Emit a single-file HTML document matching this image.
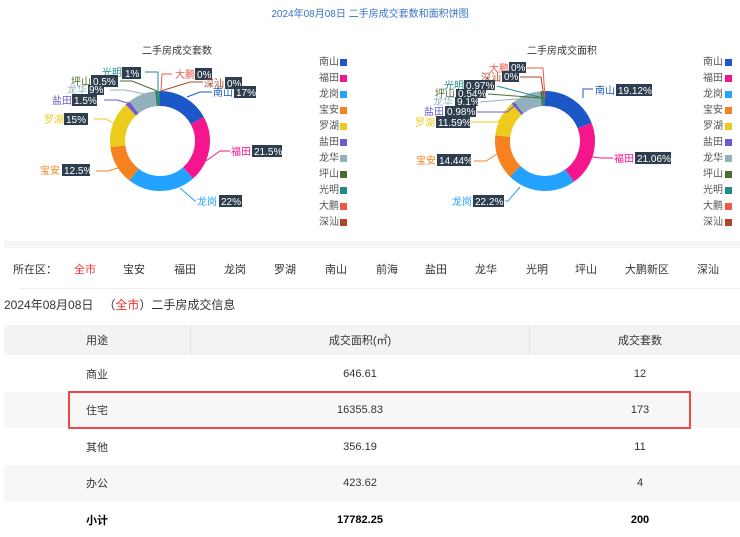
<!DOCTYPE html>
<html><head><meta charset="utf-8"><style>
body{margin:0;width:740px;height:537px;background:#fff;font-family:"Liberation Sans","Noto Sans CJK SC",sans-serif;position:relative;overflow:hidden;color:#333}
.a{position:absolute;white-space:nowrap}
.t{font-size:11px}
.lg{position:absolute;font-size:10px;color:#555}
.lg i{position:absolute;width:7px;height:7px;border-radius:1px}
.f{position:absolute;top:261px;font-size:11px;color:#333;transform:translateX(-50%)}
.c{position:absolute;font-size:11px;transform:translate(-50%,-50%)}
</style></head><body>
<div class="a" style="left:0;width:740px;top:5px;text-align:center;font-size:10px;color:#3b73c9">2024年08月08日 二手房成交套数和面积饼图</div>
<div class="a" style="left:142px;top:42px;font-size:10px;color:#333">二手房成交套数</div>
<div class="a" style="left:527px;top:42px;font-size:10px;color:#333">二手房成交面积</div>

<svg width="740" height="240" style="position:absolute;left:0;top:0" font-family="Liberation Sans,Noto Sans CJK SC,sans-serif" font-size="10">
<g transform="translate(160,141) rotate(-90)" fill="none" stroke-width="15">
<circle r="42.5" pathLength="100" stroke="#1c57c7" stroke-dasharray="17 83" stroke-dashoffset="0"/>
<circle r="42.5" pathLength="100" stroke="#f5168e" stroke-dasharray="21.5 78.5" stroke-dashoffset="-17"/>
<circle r="42.5" pathLength="100" stroke="#23a3ff" stroke-dasharray="22 78" stroke-dashoffset="-38.5"/>
<circle r="42.5" pathLength="100" stroke="#f5821f" stroke-dasharray="12.5 87.5" stroke-dashoffset="-60.5"/>
<circle r="42.5" pathLength="100" stroke="#eccb1c" stroke-dasharray="15 85" stroke-dashoffset="-73"/>
<circle r="42.5" pathLength="100" stroke="#6c5acf" stroke-dasharray="1.5 98.5" stroke-dashoffset="-88"/>
<circle r="42.5" pathLength="100" stroke="#93b1bd" stroke-dasharray="9 91" stroke-dashoffset="-89.5"/>
<circle r="42.5" pathLength="100" stroke="#4d6b2a" stroke-dasharray="0.5 99.5" stroke-dashoffset="-98.5"/>
<circle r="42.5" pathLength="100" stroke="#1f8b8b" stroke-dasharray="1 99" stroke-dashoffset="-99"/>
</g>
<g transform="translate(545,141) rotate(-90)" fill="none" stroke-width="15">
<circle r="42.5" pathLength="100" stroke="#1c57c7" stroke-dasharray="19.12 80.88" stroke-dashoffset="0"/>
<circle r="42.5" pathLength="100" stroke="#f5168e" stroke-dasharray="21.06 78.94" stroke-dashoffset="-19.12"/>
<circle r="42.5" pathLength="100" stroke="#23a3ff" stroke-dasharray="22.2 77.8" stroke-dashoffset="-40.18"/>
<circle r="42.5" pathLength="100" stroke="#f5821f" stroke-dasharray="14.44 85.56" stroke-dashoffset="-62.38"/>
<circle r="42.5" pathLength="100" stroke="#eccb1c" stroke-dasharray="11.59 88.41" stroke-dashoffset="-76.82"/>
<circle r="42.5" pathLength="100" stroke="#6c5acf" stroke-dasharray="0.98 99.02" stroke-dashoffset="-88.41"/>
<circle r="42.5" pathLength="100" stroke="#93b1bd" stroke-dasharray="9.1 90.9" stroke-dashoffset="-89.39"/>
<circle r="42.5" pathLength="100" stroke="#4d6b2a" stroke-dasharray="0.54 99.46" stroke-dashoffset="-98.49"/>
<circle r="42.5" pathLength="100" stroke="#1f8b8b" stroke-dasharray="0.97 99.03" stroke-dashoffset="-99.03"/>
</g>
<!-- leader lines left -->
<g fill="none" stroke-width="1">
<polyline points="187,97 200,92 212,92" stroke="#1c57c7"/>
<polyline points="203,163 220,151 230,151" stroke="#f5168e"/>
<polyline points="180,188 195,201 196,201" stroke="#23a3ff"/>
<polyline points="118,168 108,171 96,171" stroke="#f5821f"/>
<polyline points="113,123 106,119 94,119" stroke="#eccb1c"/>
<polyline points="128,103 117,100 104,100" stroke="#6c5acf"/>
<polyline points="145,94 125,90 110,90" stroke="#93b1bd"/>
<polyline points="157,91 132,81 120,81" stroke="#4d6b2a"/>
<polyline points="158,91 158,72 145,72" stroke="#1f8b8b"/>
<polyline points="161,91 162,74 172,74" stroke="#f0584a"/>
<polyline points="161,91 190,82 203,82" stroke="#b2432a"/>
<polyline points="583,98 583,89 593,89" stroke="#1c57c7"/>
<polyline points="587,156 600,158 613,158" stroke="#f5168e"/>
<polyline points="520,187 508,201 505,201" stroke="#23a3ff"/>
<polyline points="500,152 486,161 474,161" stroke="#f5821f"/>
<polyline points="510,112 497,122 471,122" stroke="#eccb1c"/>
<polyline points="517,104 507,112 477,112" stroke="#6c5acf"/>
<polyline points="530,98 480,102" stroke="#93b1bd"/>
<polyline points="542,98 488,94" stroke="#4d6b2a"/>
<polyline points="543,98 497,86" stroke="#1f8b8b"/>
<polyline points="544,98 541,77 520,77" stroke="#b2432a"/>
<polyline points="545,98 543,68 527,68" stroke="#f0584a"/>
</g>
<g>
<text x="102" y="76" fill="#1f8b8b">光明</text><rect x="122" y="67" width="19" height="12" fill="#2f3e4e"/><text x="125" y="77" fill="#fff">1%</text>
<text x="175" y="78" fill="#f0584a">大鹏</text><rect x="195" y="68" width="17" height="12" fill="#2f3e4e"/><text x="197" y="78" fill="#fff">0%</text>
<text x="204" y="87" fill="#b2432a">深汕</text><rect x="225" y="77" width="17" height="12" fill="#2f3e4e"/><text x="227" y="87" fill="#fff">0%</text>
<text x="213" y="96" fill="#1c57c7">南山</text><rect x="234" y="86" width="22" height="12" fill="#2f3e4e"/><text x="236" y="96" fill="#fff">17%</text>
<text x="71" y="85" fill="#4d6b2a">坪山</text><rect x="91" y="75" width="27" height="12" fill="#2f3e4e"/><text x="93" y="85" fill="#fff">0.5%</text>
<text x="67" y="93" fill="#93b1bd">龙华</text><rect x="88" y="85" width="16" height="10" fill="#2f3e4e"/><text x="89" y="93" fill="#fff">9%</text>
<text x="52" y="104" fill="#6c5acf">盐田</text><rect x="72" y="94" width="25" height="12" fill="#2f3e4e"/><text x="74" y="104" fill="#fff">1.5%</text>
<text x="44" y="123" fill="#eccb1c">罗湖</text><rect x="64" y="113" width="24" height="12" fill="#2f3e4e"/><text x="66" y="123" fill="#fff">15%</text>
<text x="231" y="155" fill="#f5168e">福田</text><rect x="252" y="145" width="30" height="12" fill="#2f3e4e"/><text x="254" y="155" fill="#fff">21.5%</text>
<text x="40" y="174" fill="#f5821f">宝安</text><rect x="62" y="164" width="28" height="12" fill="#2f3e4e"/><text x="64" y="174" fill="#fff">12.5%</text>
<text x="197" y="205" fill="#23a3ff">龙岗</text><rect x="219" y="195" width="23" height="12" fill="#2f3e4e"/><text x="221" y="205" fill="#fff">22%</text>

<text x="489" y="72" fill="#f0584a">大鹏</text><rect x="509" y="62" width="17" height="11" fill="#2f3e4e"/><text x="511" y="71" fill="#fff">0%</text>
<text x="481" y="81" fill="#b2432a">深汕</text><rect x="502" y="71" width="17" height="11" fill="#2f3e4e"/><text x="504" y="80" fill="#fff">0%</text>
<text x="444" y="89" fill="#1f8b8b">光明</text><rect x="464" y="80" width="31" height="10" fill="#2f3e4e"/><text x="466" y="89" fill="#fff">0.97%</text>
<text x="435" y="97" fill="#4d6b2a">坪山</text><rect x="456" y="89" width="30" height="9" fill="#2f3e4e"/><text x="458" y="97" fill="#fff">0.54%</text>
<text x="433" y="105" fill="#93b1bd">龙华</text><rect x="455" y="97" width="23" height="9" fill="#2f3e4e"/><text x="457" y="105" fill="#fff">9.1%</text>
<text x="424" y="115" fill="#6c5acf">盐田</text><rect x="445" y="106" width="31" height="11" fill="#2f3e4e"/><text x="447" y="115" fill="#fff">0.98%</text>
<text x="415" y="126" fill="#eccb1c">罗湖</text><rect x="436" y="116" width="34" height="12" fill="#2f3e4e"/><text x="438" y="126" fill="#fff">11.59%</text>
<text x="595" y="94" fill="#1c57c7">南山</text><rect x="616" y="84" width="36" height="12" fill="#2f3e4e"/><text x="618" y="94" fill="#fff">19.12%</text>
<text x="614" y="162" fill="#f5168e">福田</text><rect x="635" y="152" width="36" height="12" fill="#2f3e4e"/><text x="637" y="162" fill="#fff">21.06%</text>
<text x="416" y="164" fill="#f5821f">宝安</text><rect x="437" y="154" width="34" height="12" fill="#2f3e4e"/><text x="439" y="164" fill="#fff">14.44%</text>
<text x="452" y="205" fill="#23a3ff">龙岗</text><rect x="473" y="195" width="31" height="12" fill="#2f3e4e"/><text x="475" y="205" fill="#fff">22.2%</text>
</g>
</svg>

<div id="lg1"></div>
<div class="lg" style="left:319px;top:55px;line-height:16px">南山<br>福田<br>龙岗<br>宝安<br>罗湖<br>盐田<br>龙华<br>坪山<br>光明<br>大鹏<br>深汕</div>
<div class="lg" style="left:703px;top:55px;line-height:16px">南山<br>福田<br>龙岗<br>宝安<br>罗湖<br>盐田<br>龙华<br>坪山<br>光明<br>大鹏<br>深汕</div>
<svg width="740" height="240" style="position:absolute;left:0;top:0">
<g id="sq">
<rect x="340" y="59" width="7" height="7" fill="#1c57c7"/><rect x="340" y="75" width="7" height="7" fill="#f5168e"/><rect x="340" y="91" width="7" height="7" fill="#23a3ff"/><rect x="340" y="107" width="7" height="7" fill="#f5821f"/><rect x="340" y="123" width="7" height="7" fill="#eccb1c"/><rect x="340" y="139" width="7" height="7" fill="#6c5acf"/><rect x="340" y="155" width="7" height="7" fill="#93b1bd"/><rect x="340" y="171" width="7" height="7" fill="#4d6b2a"/><rect x="340" y="187" width="7" height="7" fill="#1f8b8b"/><rect x="340" y="203" width="7" height="7" fill="#f0584a"/><rect x="340" y="219" width="7" height="7" fill="#b2432a"/>
</g>
<use href="#sq" x="385"/>
</svg>

<div class="a" style="left:4px;top:241px;width:736px;height:7px;background:#f5f5f5"></div>
<div class="f" style="left:35px">所在区：</div>
<div class="f" style="left:85px;color:#f52f2f">全市</div>
<div class="f" style="left:134px">宝安</div><div class="f" style="left:185px">福田</div><div class="f" style="left:235px">龙岗</div><div class="f" style="left:285px">罗湖</div><div class="f" style="left:336px">南山</div><div class="f" style="left:387px">前海</div><div class="f" style="left:436px">盐田</div><div class="f" style="left:486px">龙华</div><div class="f" style="left:537px">光明</div><div class="f" style="left:586px">坪山</div><div class="f" style="left:647px">大鹏新区</div><div class="f" style="left:708px">深汕</div>
<div class="a" style="left:20px;top:288px;width:720px;height:1px;background:#eee"></div>
<div class="a" style="left:4px;top:296px;font-size:12px;color:#333">2024年08月08日 &nbsp;&nbsp;（<span style="color:#f52f2f">全市</span>）二手房成交信息</div>

<div class="a" style="left:4px;top:325px;width:736px;height:30px;background:#f3f3f3"></div>
<div class="a" style="left:190px;top:325px;width:1px;height:30px;background:#e4e4e4"></div>
<div class="a" style="left:529px;top:325px;width:1px;height:30px;background:#e4e4e4"></div>
<div class="a" style="left:4px;top:392px;width:736px;height:36px;background:#f7f7f7"></div>
<div class="a" style="left:4px;top:465px;width:736px;height:36px;background:#f7f7f7"></div>
<div class="a" style="left:68px;top:391px;width:619px;height:34px;border:2px solid #f04848"></div>

<div class="c" style="left:97px;top:340px">用途</div><div class="c" style="left:360px;top:340px">成交面积(㎡)</div><div class="c" style="left:640px;top:340px">成交套数</div>
<div class="c" style="left:97px;top:374px">商业</div><div class="c" style="left:360px;top:374px">646.61</div><div class="c" style="left:640px;top:374px">12</div>
<div class="c" style="left:97px;top:410px">住宅</div><div class="c" style="left:360px;top:410px">16355.83</div><div class="c" style="left:640px;top:410px">173</div>
<div class="c" style="left:97px;top:447px">其他</div><div class="c" style="left:360px;top:447px">356.19</div><div class="c" style="left:640px;top:447px">11</div>
<div class="c" style="left:97px;top:483px">办公</div><div class="c" style="left:360px;top:483px">423.62</div><div class="c" style="left:640px;top:483px">4</div>
<div class="c" style="left:97px;top:520px;font-weight:bold;color:#000">小计</div><div class="c" style="left:360px;top:520px;font-weight:bold;color:#000">17782.25</div><div class="c" style="left:640px;top:520px;font-weight:bold;color:#000">200</div>
</body></html>
